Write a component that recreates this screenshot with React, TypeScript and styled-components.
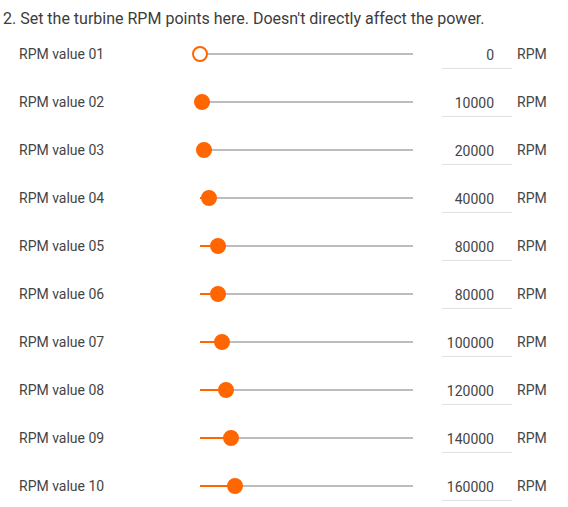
import styled, { createGlobalStyle } from "styled-components";

const MAX_RPM = 970000;

const rpmPoints = [0, 10000, 20000, 40000, 80000, 80000, 100000, 120000, 140000, 160000];

const GlobalStyle = createGlobalStyle`
  body {
    margin: 0;
    background: #ffffff;
    font-family: Roboto, "Noto Sans", Arial, sans-serif;
  }
`;

export default function App() {
  return (
    <Page>
      <GlobalStyle />
      <Title>2. Set the turbine RPM points here. Doesn't directly affect the power.</Title>
      {rpmPoints.map((rpm, i) => (
        <Row key={i}>
          <Label>RPM value {String(i + 1).padStart(2, "0")}</Label>
          <Slider>
            <Track />
            <Fill style={{ width: `${(rpm / MAX_RPM) * 100}%` }} />
            <Thumb $empty={rpm === 0} style={{ left: `${(rpm / MAX_RPM) * 100}%` }} />
          </Slider>
          <ValueInput type="text" value={rpm} readOnly />
          <Unit>RPM</Unit>
        </Row>
      ))}
    </Page>
  );
}

const Page = styled.div`
  padding: 8px 0 0 3px;
  width: 568px;
  box-sizing: border-box;
`;

const Title = styled.div`
  font-size: 16px;
  line-height: 22px;
  color: #3c3c3c;
`;

const Row = styled.div`
  display: flex;
  align-items: center;
  height: 48px;
  padding-left: 16px;
`;

const Label = styled.div`
  width: 181px;
  font-size: 14px;
  color: #454545;
`;

const Slider = styled.div`
  position: relative;
  width: 213px;
  height: 16px;
`;

const Track = styled.div`
  position: absolute;
  left: 0;
  right: 0;
  top: 7px;
  height: 2px;
  background: #bdbdbd;
`;

const Fill = styled.div`
  position: absolute;
  left: 0;
  top: 7px;
  height: 2px;
  background: #ff6600;
`;

const Thumb = styled.div<{ $empty: boolean }>`
  position: absolute;
  top: 0;
  width: 16px;
  height: 16px;
  margin-left: -8px;
  box-sizing: border-box;
  border-radius: 50%;
  background: ${(p) => (p.$empty ? "#ffffff" : "#ff6600")};
  border: 2px solid #ff6600;
`;

const ValueInput = styled.input`
  margin: 2px 0 0 29px;
  width: 70px;
  height: 28px;
  box-sizing: border-box;
  padding: 0 18px 0 0;
  border: none;
  border-bottom: 1px solid #e0e0e0;
  outline: none;
  text-align: right;
  font-family: Roboto, "Noto Sans", Arial, sans-serif;
  font-size: 14px;
  color: #454545;
  background: transparent;
`;

const Unit = styled.div`
  margin-left: 5px;
  font-size: 14px;
  color: #454545;
`;
